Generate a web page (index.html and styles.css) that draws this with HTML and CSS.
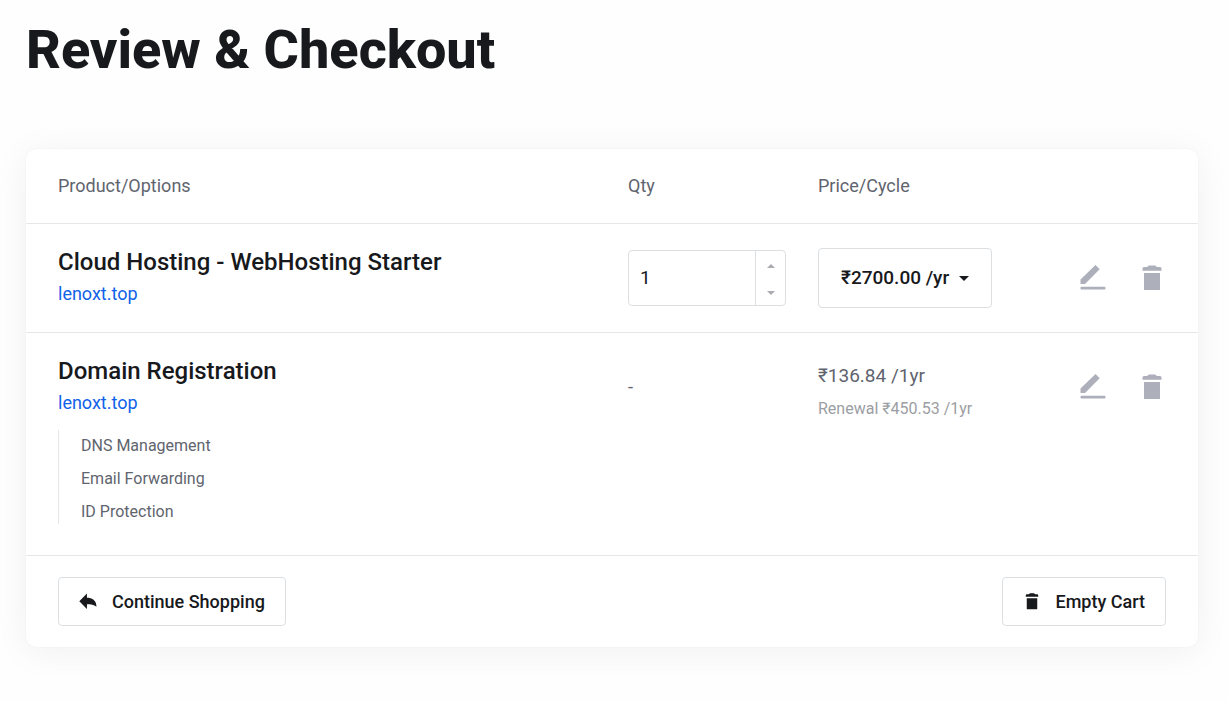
FILE: index.html
```html
<!DOCTYPE html>
<html lang="en">
<head>
<meta charset="utf-8">
<meta name="viewport" content="width=device-width, initial-scale=1">
<title>Review &amp; Checkout</title>
<link rel="stylesheet" href="styles.css">
</head>
<body>
<svg class="sprite" aria-hidden="true">
  <symbol id="edit" viewBox="0 0 26 26"><path d="M.500 14.500 15.500 0l4.200 4.200L5 19H.500z"/><rect x=".500" y="21.700" width="25" height="2.700" rx="1"/></symbol>
  <symbol id="trash" viewBox="0 0 20 26"><path d="M7 .500h6l2 1.500h3q1.500 0 1.500 1.500v2.300H.500V3.500Q.500 2 2 2h3zM2 8h16v17H2z"/></symbol>
  <symbol id="reply" viewBox="0 0 17 16"><path d="M7.500.500v4c4.500 0 9 2 9 8.500-2.500-2-5-2.300-9-2.300V15L.300 7.700z"/></symbol>
</svg>
<main class="page">
  <h1 class="page-title">Review &amp; Checkout</h1>
  <section class="card">
    <table class="cart">
      <thead>
        <tr>
          <th class="col-product" scope="col">Product/Options</th>
          <th class="col-qty" scope="col">Qty</th>
          <th class="col-price" scope="col">Price/Cycle</th>
          <td class="col-actions"></td>
        </tr>
      </thead>
      <tbody>
        <tr>
          <td>
            <h2 class="product">Cloud Hosting - WebHosting Starter</h2>
            <a class="domain" href="#">lenoxt.top</a>
          </td>
          <td>
            <div class="qty">
              <input class="qty-input" type="number" value="1" min="1" aria-label="Quantity">
              <div class="stepper">
                <button class="step" type="button" aria-label="Increase quantity"><svg class="step-icon" viewBox="0 0 8 4"><path d="M0 4 4 0l4 4z"/></svg></button>
                <button class="step" type="button" aria-label="Decrease quantity"><svg class="step-icon" viewBox="0 0 8 4"><path d="M0 0h8L4 4z"/></svg></button>
              </div>
            </div>
          </td>
          <td>
            <div class="cycle">
              <select class="cycle-select" aria-label="Billing cycle"><option>₹2700.00 /yr</option></select>
              <svg class="caret" viewBox="0 0 10 5" aria-hidden="true"><path d="M0 0h10L5 5z"/></svg>
            </div>
          </td>
          <td>
            <div class="actions">
              <button class="icon-button" type="button" aria-label="Edit Cloud Hosting"><svg class="edit-icon"><use href="#edit"/></svg></button>
              <button class="icon-button" type="button" aria-label="Remove Cloud Hosting"><svg class="trash-icon"><use href="#trash"/></svg></button>
            </div>
          </td>
        </tr>
        <tr>
          <td>
            <h2 class="product">Domain Registration</h2>
            <a class="domain" href="#">lenoxt.top</a>
            <ul class="features">
              <li>DNS Management</li>
              <li>Email Forwarding</li>
              <li>ID Protection</li>
            </ul>
          </td>
          <td><div class="no-qty">-</div></td>
          <td>
            <div class="price">₹136.84 /1yr</div>
            <div class="renewal">Renewal ₹450.53 /1yr</div>
          </td>
          <td>
            <div class="actions">
              <button class="icon-button" type="button" aria-label="Edit Domain Registration"><svg class="edit-icon"><use href="#edit"/></svg></button>
              <button class="icon-button" type="button" aria-label="Remove Domain Registration"><svg class="trash-icon"><use href="#trash"/></svg></button>
            </div>
          </td>
        </tr>
      </tbody>
    </table>
    <footer class="card-footer">
      <button class="button" type="button"><svg class="button-icon"><use href="#reply"/></svg>Continue Shopping</button>
      <button class="button" type="button"><svg class="button-icon"><use href="#trash"/></svg>Empty Cart</button>
    </footer>
  </section>
</main>
</body>
</html>
```
FILE: styles.css
```css
* {
  box-sizing: border-box;
}

body {
  margin: 0;
  background: #fefefe;
  color: #17191c;
  font: 400 18px/32px Roboto, "Noto Sans", sans-serif;
}

button,
input,
select {
  margin: 0;
  font: inherit;
  color: inherit;
}

.sprite {
  display: none;
}

.page {
  padding: 18px 30px 54px 26px;
}

.page-title {
  margin: 0 0 67px;
  font-size: 54px;
  line-height: 64px;
  font-weight: 800;
}

.card {
  border-radius: 10px;
  background: #fff;
  box-shadow: 0 0 2px rgba(0, 0, 0, 0.06), 0 4px 36px rgba(0, 0, 0, 0.06);
}

.cart {
  width: 100%;
  table-layout: fixed;
  border-collapse: collapse;
}

.cart th,
.cart td {
  padding: 22px 16px;
  border-bottom: 1px solid #e6e7ea;
  text-align: left;
  vertical-align: top;
}

.cart th {
  padding-top: 21px;
  padding-bottom: 21px;
  font-weight: 400;
  color: #5f646e;
}

.cart th:first-child,
.cart td:first-child {
  padding-left: 32px;
}

.cart td:last-child {
  padding-right: 32px;
}

.col-product {
  width: 50%;
}

.col-qty,
.col-price {
  width: 190px;
}

.product {
  margin: 0;
  font-size: 24px;
  line-height: 32px;
  font-weight: 500;
}

.domain {
  display: block;
  color: #1062e8;
  text-decoration: none;
}

.features {
  margin: 11px 0 9px;
  padding: 4px 0 0 22px;
  display: grid;
  gap: 9px;
  border-left: 1px solid #e6e7ea;
  list-style: none;
  font-size: 16px;
  line-height: 24px;
  color: #5f646e;
}

.qty {
  display: flex;
  height: 56px;
  margin-top: 4px;
  border: 1px solid #dcdfe2;
  border-radius: 4px;
}

.qty-input {
  flex: 1;
  min-width: 0;
  padding: 0 11px;
  border: 0;
  background: none;
  font-size: 19px;
  appearance: textfield;
}

.qty-input::-webkit-inner-spin-button {
  display: none;
}

.stepper {
  display: flex;
  flex-direction: column;
  gap: 2px;
  width: 30px;
  padding-top: 3px;
  border-left: 1px solid #dcdfe2;
}

.step {
  flex: 1;
  display: grid;
  place-items: center;
  padding: 0;
  border: 0;
  background: none;
}

.step-icon {
  width: 8px;
  height: 4px;
  fill: #a9abb0;
}

.cycle {
  display: grid;
  align-items: center;
  width: 174px;
  height: 60px;
  margin-top: 2px;
}

.cycle-select {
  grid-area: 1 / 1;
  width: 100%;
  height: 100%;
  padding: 0 22px;
  border: 1px solid #dcdfe2;
  border-radius: 4px;
  background: #fff;
  font-size: 19px;
  font-weight: 500;
  appearance: none;
}

.caret {
  grid-area: 1 / 1;
  justify-self: end;
  width: 10px;
  height: 5px;
  margin-right: 23px;
  fill: #17191c;
  pointer-events: none;
}

.no-qty {
  padding-top: 16px;
  color: #5f646e;
}

.price {
  padding-top: 5px;
  font-size: 19px;
  color: #5f646e;
}

.renewal {
  margin-top: 1px;
  font-size: 16px;
  color: #9b9ea3;
}

.actions {
  display: flex;
  justify-content: flex-end;
  align-items: center;
  gap: 28px;
  height: 64px;
}

.icon-button {
  display: grid;
  place-items: center;
  padding: 4px;
  border: 0;
  background: none;
  fill: #adb0bb;
}

.edit-icon {
  width: 26px;
  height: 26px;
}

.trash-icon {
  width: 20px;
  height: 26px;
}

.card-footer {
  display: flex;
  justify-content: space-between;
  padding: 21px 32px;
}

.button {
  display: flex;
  align-items: center;
  gap: 15px;
  padding: 8px 20px;
  border: 1px solid #dcdfe2;
  border-radius: 4px;
  background: #fff;
  font-weight: 500;
  line-height: 31px;
}

.button-icon {
  width: 18px;
  height: 17px;
  fill: #17191c;
}
```
